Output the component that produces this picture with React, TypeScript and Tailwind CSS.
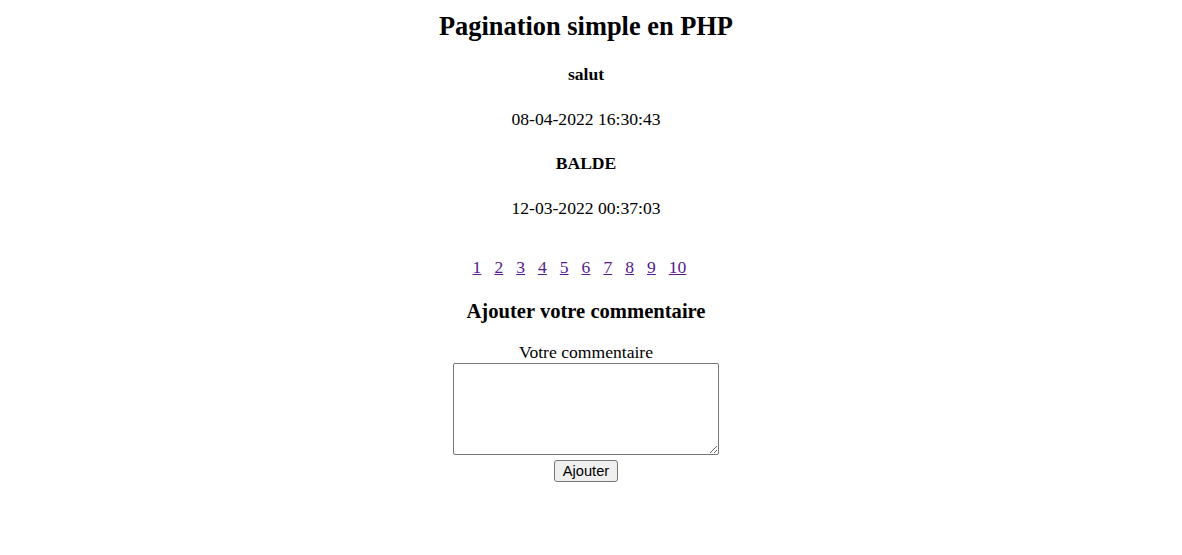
import React from "react";

export default function App() {
  const pages = [1, 2, 3, 4, 5, 6, 7, 8, 9, 10];
  return (
    <div className="w-[1172px] bg-white text-black font-['Liberation_Serif','Times_New_Roman',serif]">
      <div className="flex flex-col items-center text-center">
        <h1 className="mt-[11px] text-[26.4px] leading-[30px] font-bold">Pagination simple en PHP</h1>
        <h4 className="mt-[23px] text-[17.6px] leading-[20px] font-bold">salut</h4>
        <p className="mt-[25px] text-[17.6px] leading-[20px]">08-04-2022 16:30:43</p>
        <h4 className="mt-[24px] text-[17.6px] leading-[20px] font-bold">BALDE</h4>
        <p className="mt-[25px] text-[17.6px] leading-[20px]">12-03-2022 00:37:03</p>
        <div className="mt-[39px] flex text-[17.6px] leading-[20px]">
          {pages.map((n) => (
            <a key={n} href="#" className="mr-[13px] text-[#551a8b] underline">
              {n}
            </a>
          ))}
        </div>
        <h3 className="mt-[22px] text-[20.6px] leading-[24px] font-bold">Ajouter votre commentaire</h3>
        <label className="mt-[19px] text-[17.6px] leading-[20px]">Votre commentaire</label>
        <textarea className="mt-[1px] block w-[266px] h-[92px] border border-[#767676] rounded-[2px] bg-white resize" />
        <button className="mt-[5px] w-[64px] h-[22px] bg-[#efefef] border border-[#767676] rounded-[3px] text-[14.67px] leading-[17px] text-black font-['Liberation_Sans',Arial,sans-serif]">
          Ajouter
        </button>
      </div>
    </div>
  );
}
